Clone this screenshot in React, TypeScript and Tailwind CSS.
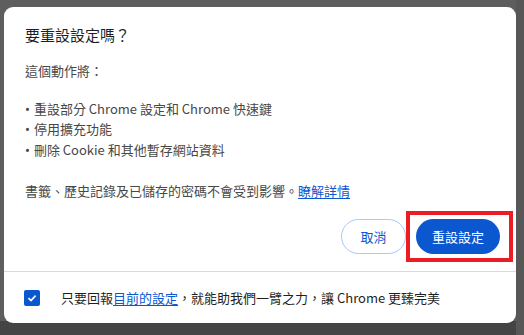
import React from "react";

const Bullet = () => (
  <span style={{ fontFamily: '"Noto Sans", sans-serif' }} className="mr-[4px]">•</span>
);

export default function App() {
  const font = { fontFamily: '"Noto Sans CJK TC", "Noto Sans", sans-serif' };
  return (
    <div className="w-[524px] h-[335px] bg-[#5e5e5e] overflow-hidden relative" style={font}>
      <div className="absolute left-0 right-0 bottom-0 h-[14px] bg-[#444444]" />
      <div className="absolute right-0 top-0 bottom-0 w-[8px] bg-[#575757]" />
      <div className="absolute left-[4px] top-[7px] w-[512px] h-[316px] bg-white rounded-[9px] flex flex-col text-[#1f1f1f]">
        <div className="pl-[21px] pr-[16px] flex flex-col">
          <div className="mt-[16px] h-[24px] leading-[24px] text-[15px]">要重設設定嗎？</div>
          <div className="mt-[14px] h-[20px] leading-[20px] text-[13px] text-[#474747]">這個動作將：</div>
          <div className="mt-[18px] flex flex-col text-[13px] text-[#474747]">
            <div className="h-[20px] leading-[20px]"><Bullet />重設部分 Chrome 設定和 Chrome 快速鍵</div>
            <div className="h-[20.5px] leading-[20.5px]"><Bullet />停用擴充功能</div>
            <div className="h-[20.5px] leading-[20.5px]"><Bullet />刪除 Cookie 和其他暫存網站資料</div>
          </div>
          <div className="mt-[21px] h-[20px] leading-[20px] text-[13px] text-[#474747]">
            書籤、歷史記錄及已儲存的密碼不會受到影響。
            <span className="text-[#0b57d0] underline underline-offset-2">瞭解詳情</span>
          </div>
          <div className="mt-[18px] flex justify-end gap-[10px]">
            <button className="w-[65px] h-[35px] rounded-full border border-[#a8c7fa] text-[#0b57d0] text-[13px] bg-white">取消</button>
            <div className="relative">
              <button className="w-[84px] h-[35px] rounded-full bg-[#0b57d0] text-white text-[13px]">重設設定</button>
              <div className="absolute left-[-10px] right-[-13px] top-[-8px] bottom-[-8px] border-[4px] border-[#ec1c24]" />
            </div>
          </div>
        </div>
        <div className="mt-[17px] h-px bg-[#dadada]" />
        <div className="flex-1 flex items-center pl-[20px] gap-[21px]">
          <div className="w-[16px] h-[16px] rounded-[2px] bg-[#0b57d0] flex items-center justify-center">
            <svg width="12" height="12" viewBox="0 0 12 12" fill="none">
              <path d="M2.5 6.2 L5 8.6 L9.6 3.6" stroke="white" strokeWidth="1.6" />
            </svg>
          </div>
          <div className="text-[13px] text-[#1f1f1f]">
            只要回報<span className="text-[#0b57d0] underline underline-offset-2">目前的設定</span>，就能助我們一臂之力，讓 Chrome 更臻完美
          </div>
        </div>
      </div>
    </div>
  );
}
